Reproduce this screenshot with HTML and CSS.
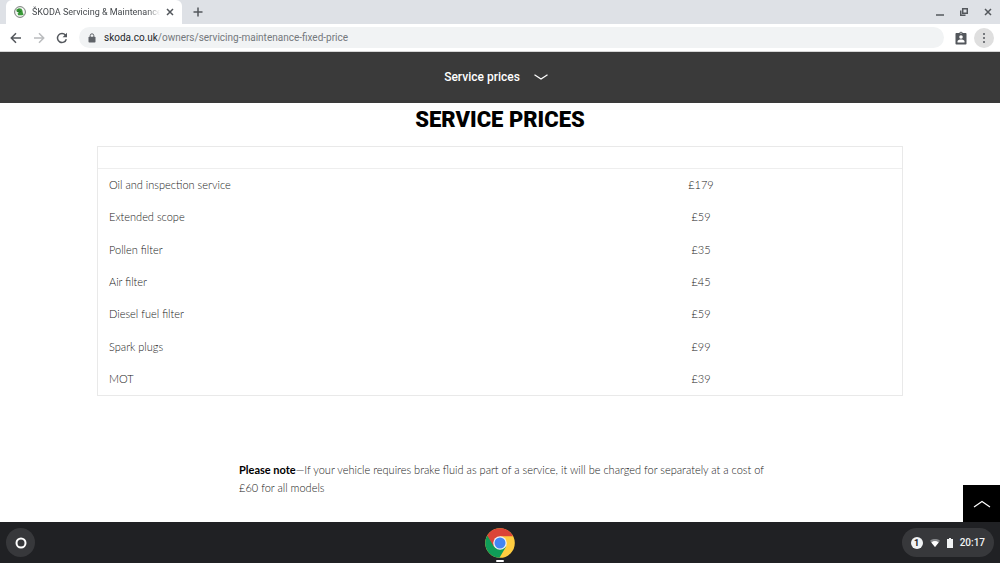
FILE: index.html
```
<!DOCTYPE html>
<html lang="en">

<head>
    <meta charset="utf-8">
    <title>ŠKODA Servicing &amp; Maintenance</title>
    <link rel="stylesheet" href="styles.css">
</head>

<body>
    <div class="tabstrip">
        <div class="tab">
            <svg class="favicon" width="12" height="12" viewBox="0 0 12 12">
                <circle cx="6" cy="6" r="5.4" fill="#f4f7f4" stroke="#777d79" stroke-width="1" />
                <path d="M2.3 3.6 5 2.3l2.4.4 1 1.8.5 2.8.9 1.1-1.6.8H4.3L3.5 7.6 5 6.8 2.6 5.4z" fill="#399a37" />
                <path d="M3 5.1l3 1.4M4 3.6l3 2.2" stroke="#1f6227" stroke-width=".6" />
            </svg>
            <span class="tab-title">ŠKODA Servicing &amp; Maintenance</span>
            <button class="icon-button" aria-label="Close tab">
                <svg width="8" height="8" viewBox="0 0 8 8"><path d="M1 1l6 6M7 1L1 7" /></svg>
            </button>
        </div>
        <button class="icon-button new-tab" aria-label="New tab">
            <svg width="10" height="10" viewBox="0 0 10 10"><path d="M5 .5v9M.5 5h9" /></svg>
        </button>
        <div class="window-controls">
            <button class="icon-button" aria-label="Minimise">
                <svg width="8" height="8" viewBox="0 0 8 8"><path d="M0 7h8" /></svg>
            </button>
            <button class="icon-button" aria-label="Restore">
                <svg width="8" height="8" viewBox="0 0 8 8"><path d="M2.7.7h4.6v4.6H2.7zM.7 2.5v4.8h4.8" /></svg>
            </button>
            <button class="icon-button" aria-label="Close window">
                <svg width="8" height="8" viewBox="0 0 8 8"><path d="M1 1l6 6M7 1L1 7" /></svg>
            </button>
        </div>
    </div>

    <div class="toolbar">
        <button class="icon-button" aria-label="Back">
            <svg width="12" height="12" viewBox="0 0 12 12"><path d="M11 6H1.5M6 1.3L1.3 6 6 10.7" /></svg>
        </button>
        <button class="icon-button faded" aria-label="Forward">
            <svg width="12" height="12" viewBox="0 0 12 12"><path d="M1 6h9.5M6 1.3L10.7 6 6 10.7" /></svg>
        </button>
        <button class="icon-button" aria-label="Reload">
            <svg width="12" height="12" viewBox="0 0 12 12">
                <path d="M10.3 7.3A4.5 4.5 0 1 1 9.5 3.2" />
                <path d="M11 .8v4.4H6.6z" class="solid" />
            </svg>
        </button>
        <div class="address">
            <svg width="8" height="10" viewBox="0 0 8 10">
                <rect x=".5" y="3.8" width="7" height="5.7" rx=".8" fill="#5f6368" />
                <path d="M2.2 4V2.6a1.8 1.8 0 0 1 3.6 0V4" fill="none" stroke="#5f6368" stroke-width="1" />
            </svg>
            <span><b>skoda.co.uk</b>/owners/servicing-maintenance-fixed-price</span>
        </div>
        <button class="icon-button" aria-label="Extension">
            <svg width="12" height="14" viewBox="0 0 12 14">
                <path d="M1.3 2h3a1.8 1.8 0 0 1 3.4 0h3c.5 0 .8.3.8.8v9.9c0 .5-.3.8-.8.8H1.3c-.5 0-.8-.3-.8-.8V2.8c0-.5.3-.8.8-.8z" class="solid" />
                <g class="badge">
                    <circle cx="6" cy="6" r="1.8" />
                    <path d="M2.5 11.5v-1C2.5 9.2 4.5 8.6 6 8.6s3.5.6 3.5 1.9v1z" />
                    <circle cx="6" cy="2.2" r=".6" />
                </g>
            </svg>
        </button>
        <button class="icon-button menu" aria-label="Menu">
            <svg width="4" height="12" viewBox="0 0 4 12">
                <circle cx="2" cy="2" r="1" /><circle cx="2" cy="6" r="1" /><circle cx="2" cy="10" r="1" />
            </svg>
        </button>
    </div>

    <main>
        <button class="section-nav">
            Service prices
            <svg width="14" height="6" viewBox="0 0 14 6"><path d="M.5 .7L7 5 13.5 .7" /></svg>
        </button>

        <h1>SERVICE PRICES</h1>

        <table class="prices">
            <thead>
                <tr><th></th><th></th></tr>
            </thead>
            <tbody>
                <tr><td>Oil and inspection service</td><td>£179</td></tr>
                <tr><td>Extended scope</td><td>£59</td></tr>
                <tr><td>Pollen filter</td><td>£35</td></tr>
                <tr><td>Air filter</td><td>£45</td></tr>
                <tr><td>Diesel fuel filter</td><td>£59</td></tr>
                <tr><td>Spark plugs</td><td>£99</td></tr>
                <tr><td>MOT</td><td>£39</td></tr>
            </tbody>
        </table>

        <p class="note"><b>Please note</b>—If your vehicle requires brake fluid as part of a service, it will be charged for separately at a cost of £60 for all models</p>

        <a class="to-top" href="#" aria-label="Back to top">
            <svg width="18" height="8" viewBox="0 0 18 8"><path d="M1 7l8-5.5L17 7" /></svg>
        </a>
    </main>

    <div class="shelf">
        <button class="launcher" aria-label="Launcher">
            <svg width="12" height="12" viewBox="0 0 12 12"><circle cx="6" cy="6" r="4.5" /></svg>
        </button>
        <button class="chrome" aria-label="Chrome">
            <svg width="30" height="30" viewBox="0 0 30 30">
                <circle cx="15" cy="15" r="14.8" fill="#ffcd40" />
                <path d="M15 15L2.2 7.6A14.8 14.8 0 0 0 14.5 29.8L21.1 18.5z" fill="#0f9d58" />
                <path d="M15 15L8.9 18.5 2.2 7.6A14.8 14.8 0 0 1 28.1 8.2H15z" fill="#db4437" />
                <circle cx="15" cy="15" r="6.8" fill="#f1f1f1" />
                <circle cx="15" cy="15" r="5.5" fill="#4285f4" />
            </svg>
        </button>
        <button class="status">
            <span class="count">1</span>
            <svg width="10" height="8" viewBox="0 0 10 8">
                <path d="M0 1.8a7.5 7.5 0 0 1 10 0L5 8z" fill="#85878a" />
                <path d="M1.3 3.4a6 6 0 0 1 7.4 0L5 8z" fill="#fff" />
            </svg>
            <svg width="6" height="10" viewBox="0 0 6 10"><path d="M2 0h2v1h2v9H0V1h2z" fill="#f1f3f4" /></svg>
            <span>20:17</span>
        </button>
    </div>
</body>

</html>
```
FILE: styles.css
```
* {
    box-sizing: border-box;
}

body {
    display: flex;
    flex-direction: column;
    height: 100vh;
    margin: 0;
    background: white;
    color: #202020;
    font-family: Roboto, "Liberation Sans", sans-serif;
    font-size: 11px;
}

button {
    border: 0;
    padding: 0;
    background: none;
    color: inherit;
    font: inherit;
}

svg {
    display: block;
    flex: none;
}

.icon-button {
    display: flex;
    align-items: center;
    justify-content: center;
}

.icon-button svg {
    fill: none;
    stroke: #53575c;
    stroke-width: 1.5;
}

.icon-button .solid,
.icon-button circle {
    fill: #53575c;
    stroke: none;
}

.icon-button .badge * {
    fill: white;
    stroke: none;
}

.icon-button.faded svg {
    stroke: #babcbe;
}

.tabstrip {
    display: flex;
    flex: none;
    align-items: center;
    height: 24px;
    padding: 0 8px 0 6px;
    background: #dee1e6;
}

.tab {
    display: flex;
    align-items: center;
    gap: 6px;
    width: 176px;
    height: 24px;
    padding: 0 8px;
    border-radius: 6px 6px 0 0;
    background: white;
    color: #45494d;
    font-size: 9px;
}

.tab-title {
    flex: 1;
    overflow: hidden;
    line-height: 18px;
    white-space: nowrap;
    -webkit-mask-image: linear-gradient(to right, black 90%, transparent);
    mask-image: linear-gradient(to right, black 90%, transparent);
}

.new-tab {
    margin-left: 11px;
}

.window-controls {
    display: flex;
    gap: 16px;
    margin-left: auto;
}

.toolbar {
    display: flex;
    flex: none;
    align-items: center;
    gap: 11px;
    height: 28px;
    padding: 0 6px 0 10px;
    border-bottom: 1px solid #d5d5d5;
    background: white;
}

.address {
    display: flex;
    flex: 1;
    align-items: center;
    gap: 8px;
    height: 21px;
    padding: 0 9px;
    border-radius: 11px;
    background: #f1f3f4;
    color: #74787c;
    font-size: 10px;
}

.address b {
    color: #26282b;
    font-weight: 400;
}

.toolbar .menu {
    width: 20px;
    height: 20px;
    margin-left: -4px;
    border-radius: 50%;
    background: #dfdfdf;
}

main {
    position: relative;
    flex: 1;
    min-height: 0;
    overflow: hidden;
    font-family: Lato, Roboto, sans-serif;
    font-weight: 300;
}

.section-nav {
    display: flex;
    align-items: center;
    justify-content: center;
    gap: 14px;
    width: 100%;
    height: 51px;
    padding: 0 8px 2px 0;
    background: #3a3a3a;
    color: white;
    font-family: Roboto, sans-serif;
    font-size: 12px;
    font-weight: 500;
}

.section-nav svg,
.to-top svg,
.launcher svg {
    fill: none;
    stroke: white;
    stroke-width: 1.2;
}

h1 {
    margin: 4px 0 14px;
    color: black;
    font-family: Roboto, sans-serif;
    font-size: 22px;
    font-weight: 900;
    line-height: 25px;
    text-align: center;
}

.prices {
    width: calc(100% - 194px);
    height: 250px;
    margin: 0 auto;
    border: 1px solid #e9e9e9;
    border-spacing: 0;
    table-layout: fixed;
}

.prices th {
    height: 22px;
    padding: 0;
    border-bottom: 1px solid #eee;
}

.prices td {
    height: 32px;
    padding: 0 11px 1px;
}

.prices td + td {
    text-align: center;
}

.note {
    max-width: 772px;
    margin: 65px 0 0;
    padding-left: 239px;
    line-height: 18px;
}

.note b {
    color: black;
    font-weight: 700;
}

.to-top {
    position: absolute;
    right: 0;
    bottom: 0;
    display: flex;
    align-items: center;
    justify-content: center;
    width: 37px;
    height: 37px;
    background: black;
}

.shelf {
    display: grid;
    grid-template-columns: 1fr auto 1fr;
    flex: none;
    align-items: center;
    height: 41px;
    padding: 0 6px;
    background: #202124;
    color: #f1f3f4;
}

.launcher {
    display: flex;
    align-items: center;
    justify-content: center;
    width: 29px;
    height: 29px;
    border-radius: 50%;
    background: #37383b;
}

.launcher svg {
    stroke-width: 2;
}

.chrome {
    position: relative;
}

.chrome::after {
    content: "";
    position: absolute;
    bottom: -4px;
    left: 11px;
    width: 8px;
    height: 2px;
    border-radius: 1px;
    background: white;
}

.status {
    display: flex;
    align-items: center;
    justify-self: end;
    gap: 7px;
    height: 29px;
    padding: 0 9px;
    border-radius: 15px;
    background: #37383b;
    font-size: 10px;
    font-weight: 500;
}

.count {
    width: 12px;
    border-radius: 50%;
    background: #f1f3f4;
    color: #202124;
    font-size: 9px;
    font-weight: 700;
    line-height: 12px;
}
```
